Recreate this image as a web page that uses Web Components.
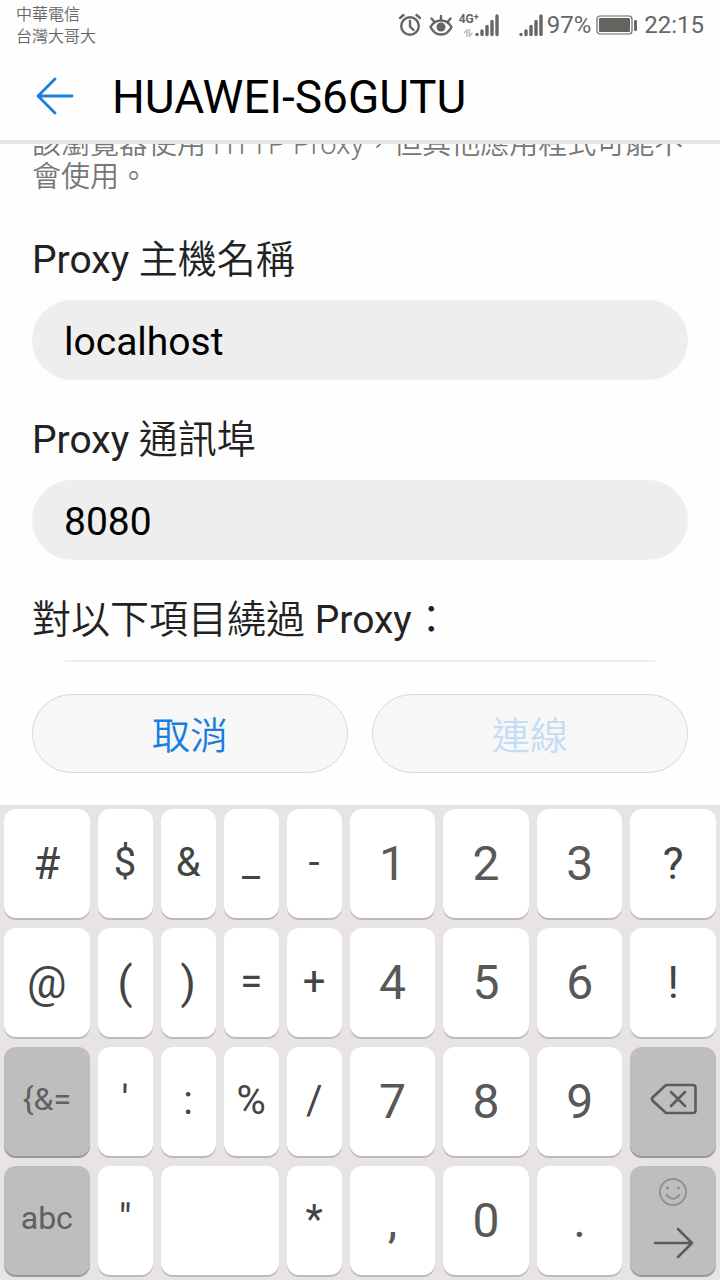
<!DOCTYPE html>
<html lang="zh-TW">
<head>
<meta charset="utf-8">
<meta name="viewport" content="width=device-width, initial-scale=1">
<title>HUAWEI-S6GUTU</title>
<style>
body {
  margin: 0;
  height: 100vh;
  background: #fefefe;
  color: #222;
  font-family: Roboto, "Noto Sans CJK TC", sans-serif;
}
</style>
</head>
<body>
<wifi-screen></wifi-screen>

<template id="status-bar">
<style>
:host {
  display: flex;
  justify-content: space-between;
  align-items: center;
  height: 50px;
  padding: 0 16px;
  color: #666;
}
.carriers {
  padding-top: 2px;
  font-size: 16px;
  line-height: 22px;
  font-weight: 350;
  color: #666;
}
.icons {
  display: flex;
  align-items: center;
  font-size: 24px;
  line-height: 28px;
}
svg { display: block; }
.alarm { margin-right: 8px; }
.eye { margin-right: 6px; }
.bars { margin-right: 4px; }
.battery { margin: 0 6px 0 5px; }
.cell {
  display: flex;
  margin-right: 20px;
}
.net {
  width: 16px;
  font-size: 12px;
  line-height: 12px;
  font-weight: 700;
  white-space: nowrap;
}
.net sup {
  font-size: 9px;
  line-height: 0;
  vertical-align: 3px;
}
.net svg { margin: 4px 0 0 4px; }
</style>
<div class="carriers">
  <div>中華電信</div>
  <div>台灣大哥大</div>
</div>
<div class="icons">
  <svg class="alarm" width="22" height="24" viewBox="0 0 22 24" fill="none" stroke="#666" stroke-width="2.400" stroke-linecap="round">
    <circle cx="11" cy="13" r="8.800"/>
    <path d="M11 8v5.500l3.500 3.500M1 5l3.500-3M21 5l-3.500-3"/>
  </svg>
  <svg class="eye" width="24" height="24" viewBox="0 0 24 24" fill="none" stroke="#666" stroke-width="2.400">
    <path d="M1.500 14C4 9.500 8 7.500 12 7.500S20 9.500 22.500 14C20 19 16 21.500 12 21.500S4 19 1.500 14z"/>
    <circle cx="12" cy="14" r="4.500" fill="#666" stroke="none"/>
    <path stroke-linecap="round" d="M12 7V3M5.500 9L2.500 5.500M18.500 9l3-3.500"/>
  </svg>
  <div class="cell">
    <div class="net">4G<sup>+</sup>
      <svg width="10" height="8" viewBox="0 0 10 8" fill="none" stroke="#bbb" stroke-width="1.500"><path d="M4 8V1L1 4M6.500 0v7l3-3"/></svg>
    </div>
    <svg width="24" height="24" viewBox="0 0 24 24" stroke="#666" stroke-width="3.400" stroke-linecap="round"><path d="M2 21.500v.1M7 18v3.500M12 13.500v8M17 8.500v13M22 3v18.500"/></svg>
  </div>
  <svg class="bars" width="24" height="24" viewBox="0 0 24 24" stroke="#666" stroke-width="3.400" stroke-linecap="round"><path d="M2 21.500v.1M7 18v3.500M12 13.500v8M17 8.500v13M22 3v18.500"/></svg>
  <span>97%</span>
  <svg class="battery" width="42" height="20" viewBox="0 0 42 20">
    <rect x="1" y="1" width="35" height="18" rx="3" fill="none" stroke="#666" stroke-width="1.200"/>
    <rect x="3" y="3" width="31" height="14" rx="1" fill="#62645f"/>
    <rect x="38" y="5" width="3" height="11" rx="1" fill="#666"/>
  </svg>
  <time>22:15</time>
</div>
</template>

<template id="title-bar">
<style>
:host {
  display: flex;
  align-items: center;
  height: 90px;
  padding: 0 32px;
  gap: 32px;
  border-bottom: 4px solid #e8e4e7;
}
a {
  display: block;
  width: 48px;
  height: 48px;
}
svg { display: block; }
h1 {
  margin: 0;
  padding-top: 4px;
  font-size: 46px;
  line-height: 56px;
  font-weight: 400;
  color: #000;
}
</style>
<a href="#back" aria-label="返回">
  <svg width="48" height="48" viewBox="0 0 48 48" fill="none" stroke="#1a7de0" stroke-width="2.800" stroke-linecap="round" stroke-linejoin="round"><path d="M40 25H6M23 8L6 25l17 17"/></svg>
</a>
<h1><slot></slot></h1>
</template>

<template id="text-field">
<style>
:host {
  display: flex;
  flex-direction: column;
  gap: 12px;
  padding-top: 32px;
}
label {
  font-size: 39px;
  line-height: 56px;
}
input {
  box-sizing: border-box;
  width: 100%;
  height: 80px;
  padding: 4px 32px 0;
  border: 0;
  border-radius: 40px;
  outline: 0;
  background: #eee;
  color: #000;
  font: inherit;
  font-size: 39px;
}
</style>
<label for="box"><slot></slot></label>
<input id="box" type="text">
</template>

<template id="pill-button">
<style>
:host {
  display: block;
  flex: 1;
}
button {
  box-sizing: border-box;
  width: 100%;
  height: 79px;
  padding: 4px 0 0;
  border: 1px solid #d8d8d8;
  border-radius: 40px;
  background: #f7f7f7;
  color: #1a7de0;
  font: inherit;
  font-size: 38px;
  font-weight: 350;
  line-height: 56px;
}
button:disabled { color: #c5dcf5; }
</style>
<button type="button"><slot></slot></button>
</template>

<template id="key-cap">
<style>
:host { display: block; }
:host([span]) { grid-column: span 2; }
button {
  display: flex;
  flex-direction: column;
  align-items: center;
  justify-content: center;
  width: 100%;
  height: 100%;
  padding: 0;
  border: 0;
  border-radius: 12px;
  background: #fff;
  box-shadow: 0 2px 0 #bdb9bc;
  color: #444;
  font: inherit;
  font-size: 44px;
  line-height: 56px;
}
:host([kind=digit]) button {
  font-size: 48px;
  color: #585858;
}
:host([kind=small]) button {
  padding-bottom: 2px;
  font-size: 40px;
}
:host([kind=mode]) button {
  padding-bottom: 6px;
  background: #bebebe;
  box-shadow: 0 2px 0 #989698;
  font-size: 32px;
  color: #606060;
}
</style>
<button type="button"><slot></slot></button>
</template>

<template id="soft-keyboard">
<style>
:host {
  display: grid;
  grid-template-columns: 14fr repeat(4, 9fr) repeat(4, 14fr);
  grid-auto-rows: 109px;
  gap: 10px 8px;
  padding: 4px 4px 5px;
  background: #e7e3e7;
}
.next { margin-top: 20px; }
svg { display: block; }
</style>
<key-cap>#</key-cap>
<key-cap kind="small">$</key-cap>
<key-cap kind="small">&amp;</key-cap>
<key-cap kind="small">_</key-cap>
<key-cap kind="small">-</key-cap>
<key-cap kind="digit">1</key-cap>
<key-cap kind="digit">2</key-cap>
<key-cap kind="digit">3</key-cap>
<key-cap>?</key-cap>

<key-cap>@</key-cap>
<key-cap>(</key-cap>
<key-cap>)</key-cap>
<key-cap kind="small">=</key-cap>
<key-cap kind="small">+</key-cap>
<key-cap kind="digit">4</key-cap>
<key-cap kind="digit">5</key-cap>
<key-cap kind="digit">6</key-cap>
<key-cap>!</key-cap>

<key-cap kind="mode">{&amp;=</key-cap>
<key-cap kind="small">'</key-cap>
<key-cap kind="small">:</key-cap>
<key-cap kind="small">%</key-cap>
<key-cap kind="small">/</key-cap>
<key-cap kind="digit">7</key-cap>
<key-cap kind="digit">8</key-cap>
<key-cap kind="digit">9</key-cap>
<key-cap kind="mode" name="刪除">
  <svg width="48" height="32" viewBox="0 0 48 32" fill="none" stroke="#5c5c5c" stroke-width="2.600" stroke-linecap="round" stroke-linejoin="round"><path d="M17 2h27a2.500 2.500 0 0 1 2.500 2.500v23a2.500 2.500 0 0 1-2.500 2.500H17L4 18q-2-2 0-4zM22 9l14 14M36 9L22 23"/></svg>
</key-cap>

<key-cap kind="mode">abc</key-cap>
<key-cap kind="small">"</key-cap>
<key-cap span name="空格"></key-cap>
<key-cap kind="small">*</key-cap>
<key-cap kind="digit">,</key-cap>
<key-cap kind="digit">0</key-cap>
<key-cap kind="digit">.</key-cap>
<key-cap kind="mode" name="下一個">
  <svg width="30" height="30" viewBox="0 0 30 30" fill="none" stroke="#929292" stroke-width="2" stroke-linecap="round">
    <circle cx="15" cy="15" r="13"/>
    <path d="M8.500 18q6.500 7.500 13 0"/>
    <circle cx="9.500" cy="11" r="1.600" fill="#929292" stroke="none"/>
    <circle cx="20.500" cy="11" r="1.600" fill="#929292" stroke="none"/>
  </svg>
  <svg class="next" width="42" height="32" viewBox="0 0 42 32" fill="none" stroke="#5c5c5c" stroke-width="2.600" stroke-linecap="round" stroke-linejoin="round"><path d="M3 16h37M26 2l14 14-14 14"/></svg>
</key-cap>
</template>

<template id="wifi-screen">
<style>
:host {
  display: flex;
  flex-direction: column;
  height: 100%;
}
main {
  flex: 1;
  min-height: 0;
  box-sizing: border-box;
  overflow-y: auto;
  scrollbar-width: none;
  padding: 16px 32px 32px;
}
p {
  margin: 0;
  padding-bottom: 6px;
  font-size: 29px;
  line-height: 33px;
  font-weight: 350;
  color: #777;
}
/* Chinese text sits a touch lighter than the Latin beside it */
text-field span { font-weight: 350; }
footer {
  display: flex;
  gap: 24px;
  padding: 32px;
}
</style>
<status-bar></status-bar>
<title-bar>HUAWEI-S6GUTU</title-bar>
<main>
  <p>該瀏覽器使用 HTTP Proxy，但其他應用程式可能不會使用。</p>
  <text-field value="localhost">Proxy <span>主機名稱</span></text-field>
  <text-field value="8080">Proxy <span>通訊埠</span></text-field>
  <text-field><span>對以下項目繞過</span> Proxy<span>：</span></text-field>
</main>
<footer>
  <pill-button>取消</pill-button>
  <pill-button disabled>連線</pill-button>
</footer>
<soft-keyboard></soft-keyboard>
</template>

<script>
class BaseElement extends HTMLElement {
  constructor() {
    super()
    this.attachShadow({ mode: 'open' })
    let template = document.getElementById(this.localName)
    this.shadowRoot.appendChild(template.content.cloneNode(true))
  }
}

class StatusBar extends BaseElement {}
class TitleBar extends BaseElement {}
class SoftKeyboard extends BaseElement {}

class TextField extends BaseElement {
  connectedCallback() {
    this.shadowRoot.querySelector('input').value = this.getAttribute('value') || ''
  }
}

class PillButton extends BaseElement {
  connectedCallback() {
    this.shadowRoot.querySelector('button').disabled = this.hasAttribute('disabled')
  }
}

class KeyCap extends BaseElement {
  connectedCallback() {
    // keys without a printed character need a spoken name
    if (this.hasAttribute('name')) {
      this.shadowRoot.querySelector('button').setAttribute('aria-label', this.getAttribute('name'))
    }
  }
}

class WifiScreen extends BaseElement {
  connectedCallback() {
    // the form opens scrolled down to the proxy fields
    this.shadowRoot.querySelector('main').scrollTop = 32
  }
}

customElements.define('status-bar', StatusBar)
customElements.define('title-bar', TitleBar)
customElements.define('text-field', TextField)
customElements.define('pill-button', PillButton)
customElements.define('key-cap', KeyCap)
customElements.define('soft-keyboard', SoftKeyboard)
customElements.define('wifi-screen', WifiScreen)
</script>
</body>
</html>
